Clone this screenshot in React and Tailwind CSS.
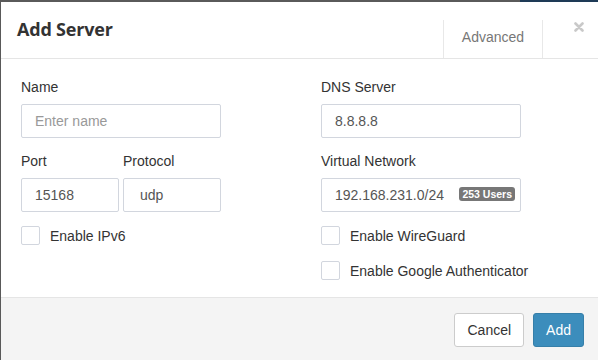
import { useState } from 'react'

const font = { fontFamily: '"Liberation Sans", Arial, sans-serif' }

function Field({ label, children, className = '' }) {
  return (
    <div className={className}>
      <div className="h-[20px] leading-[20px] mb-[7px] text-[14px] text-[#333]">{label}</div>
      {children}
    </div>
  )
}

function TextInput({ value, placeholder, width = 'w-[200px]', pad = 'pl-[13px]', onChange }) {
  return (
    <input
      type="text"
      value={value}
      placeholder={placeholder}
      onChange={onChange}
      className={`${width} ${pad} h-[34px] block border border-[#d2d6de] rounded-[2px] bg-white text-[14px] text-[#555] placeholder:text-[#999] outline-none`}
    />
  )
}

function Check({ label, checked, onToggle }) {
  return (
    <label className="flex items-center h-[19px] cursor-pointer">
      <span
        onClick={onToggle}
        className="w-[19px] h-[19px] border border-[#d2d6de] rounded-[2px] bg-white flex items-center justify-center"
      >
        {checked && (
          <svg width="11" height="11" viewBox="0 0 11 11">
            <path d="M1.5 5.5l3 3 5-6" fill="none" stroke="#3c8dbc" strokeWidth="2" />
          </svg>
        )}
      </span>
      <span className="ml-[10px] text-[14px] text-[#333] leading-[20px]">{label}</span>
    </label>
  )
}

export default function App() {
  const [form, setForm] = useState({ name: '', port: '15168', protocol: 'udp', dns: '8.8.8.8', network: '192.168.231.0/24' })
  const [checks, setChecks] = useState({ ipv6: false, wg: false, ga: false })
  const toggle = (k) => setChecks({ ...checks, [k]: !checks[k] })
  const set = (k) => (e) => setForm({ ...form, [k]: e.target.value })

  return (
    <div className="w-[598px] h-[360px] overflow-hidden bg-[#555] flex flex-col" style={font}>
      <div className="h-[2px] flex shrink-0">
        <div className="flex-1 bg-[#5a5a5a]" />
        <div className="w-[78px] bg-[#1e3a56]" />
      </div>
      <div className="flex flex-1">
        <div className="w-[1px] bg-[#595959] shrink-0" />
        <div className="w-[598px] shrink-0 bg-white flex flex-col">
          {/* header */}
          <div className="h-[57px] border-b border-[#e5e5e5] flex">
            <h1
              className="self-center -mt-[2px] pl-[16px] text-[18px] font-bold text-[#333]"
              style={{ fontFamily: '"Open Sans", sans-serif', letterSpacing: '-0.2px' }}
            >
              Add Server
            </h1>
            <div className="ml-auto self-end h-[38px] w-[100px] border-x border-[#e8e8e8] flex justify-center pt-[7px] text-[14px] leading-[20px] text-[#777]">
              Advanced
            </div>
            <div className="w-[56px] pt-[20px] pl-[31px]">
              <svg width="10" height="10" viewBox="0 0 10 10">
                <path d="M1.5 1.5l7 7M8.5 1.5l-7 7" stroke="#c9c9c9" strokeWidth="2.6" strokeLinecap="round" />
              </svg>
            </div>
          </div>

          {/* body */}
          <div className="h-[238px] pl-[20px] pt-[18px] grid grid-cols-[300px_300px]">
            <div>
              <Field label="Name" className="mb-[13px]">
                <TextInput value={form.name} placeholder="Enter name" onChange={set('name')} />
              </Field>
              <div className="flex gap-[4px]">
                <Field label="Port">
                  <TextInput value={form.port} width="w-[98px]" onChange={set('port')} />
                </Field>
                <Field label="Protocol">
                  <TextInput value={form.protocol} width="w-[98px]" pad="pl-[16px]" onChange={set('protocol')} />
                </Field>
              </div>
              <div className="mt-[14px]">
                <Check label="Enable IPv6" checked={checks.ipv6} onToggle={() => toggle('ipv6')} />
              </div>
            </div>
            <div>
              <Field label="DNS Server" className="mb-[13px]">
                <TextInput value={form.dns} onChange={set('dns')} />
              </Field>
              <Field label="Virtual Network">
                <div className="relative w-[200px]">
                  <TextInput value={form.network} onChange={set('network')} />
                  <span className="absolute right-[6px] top-[9px] h-[14px] px-[3px] rounded-[3px] bg-[#777] text-white text-[10.5px] font-bold leading-[14px]">
                    253 Users
                  </span>
                </div>
              </Field>
              <div className="mt-[14px] flex flex-col gap-[16px]">
                <Check label="Enable WireGuard" checked={checks.wg} onToggle={() => toggle('wg')} />
                <Check label="Enable Google Authenticator" checked={checks.ga} onToggle={() => toggle('ga')} />
              </div>
            </div>
          </div>

          {/* footer */}
          <div className="flex-1 border-t border-[#e5e5e5] bg-[#f4f4f4] flex justify-end items-start gap-[9px] pt-[15px] pr-[15px]">
            <button className="h-[34px] px-[12px] border border-[#ccc] rounded-[3px] bg-white text-[14px] text-[#333]">
              Cancel
            </button>
            <button className="h-[34px] px-[12px] border border-[#367fa9] rounded-[3px] bg-[#3c8dbc] text-[14px] text-white">
              Add
            </button>
          </div>
        </div>
      </div>
    </div>
  )
}
